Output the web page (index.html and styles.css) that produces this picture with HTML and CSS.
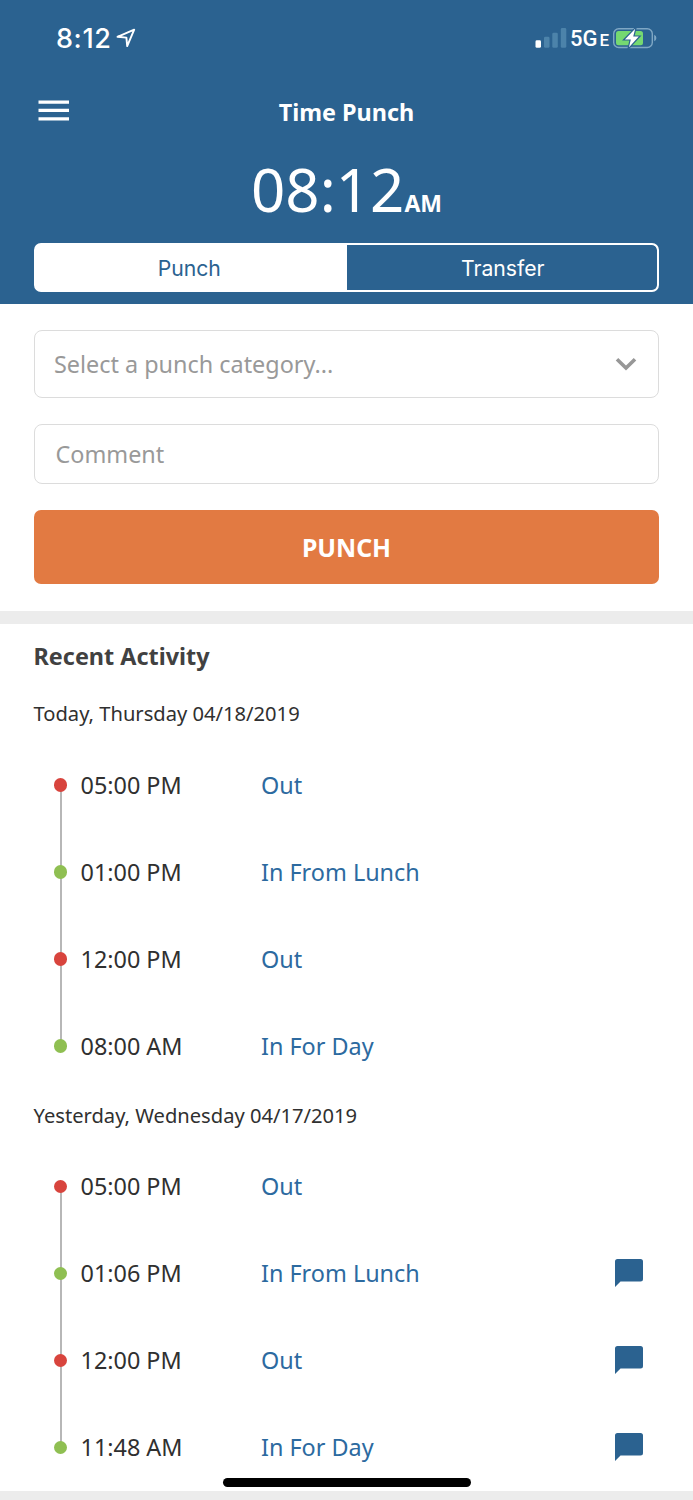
FILE: index.html
```html
<!DOCTYPE html>
<html lang="en">
<head>
<meta charset="utf-8">
<title>Time Punch</title>
<link rel="stylesheet" href="styles.css">
</head>
<body>
<header class="header">
  <div class="status">
    <div class="status-left">
      <span class="status-time">8:12</span>
      <svg class="location" width="20" height="20" viewBox="0 0 20 20"><path d="M1.5 8.8 18.2 1.7 11.2 18.1 10.4 9.6Z" fill="none" stroke="#fff" stroke-width="1.9" stroke-linejoin="round"/></svg>
    </div>
    <div class="status-right">
      <svg class="signal" width="32" height="20" viewBox="0 0 32 20"><rect x=".5" y="12.3" width="5.5" height="7.5" rx="1.4" fill="#fff"/><g fill="#4c83aa"><rect x="9" y="8.7" width="5.5" height="11.1" rx="1.4"/><rect x="17.3" y="4.7" width="5.5" height="15.1" rx="1.4"/><rect x="25.8" y="0" width="5.5" height="19.8" rx="1.4"/></g></svg>
      <span class="network">5G</span><span class="network-e">E</span>
      <svg class="battery" width="46" height="22" viewBox="0 0 46 22"><rect x="1.7" y="1.7" width="38.6" height="18.8" rx="5" fill="none" stroke="#7fa7c4" stroke-width="1.4"/><rect x="4" y="4" width="27" height="14.2" rx="2.5" fill="#75d971"/><path d="M42.2 7.8q2.2 1 2.2 3.2t-2.2 3.2Z" fill="#7fa7c4"/><path d="M23.2 1.8 12.9 12.4H18.8L17 20.2 26.8 9.6H21.2Z" fill="#fff" stroke="#2b6290" stroke-width="2.4" paint-order="stroke"/></svg>
    </div>
  </div>
  <div class="navbar">
    <svg class="menu" width="32" height="22" viewBox="0 0 32 22"><path d="M.5 2.2h30.5M.5 10.4h30.5M.5 18.8h30.5" stroke="#fff" stroke-width="3.2"/></svg>
    <h1 class="title">Time Punch</h1>
  </div>
  <div class="clock">08:12<span class="meridiem">AM</span></div>
  <div class="segments"><div class="segment active">Punch</div><div class="segment">Transfer</div></div>
</header>
<section class="form">
  <div class="field select"><span>Select a punch category...</span><svg width="22" height="14" viewBox="0 0 22 14"><path d="M2 2.2 11 11 20 2.2" fill="none" stroke="#979797" stroke-width="3.6"/></svg></div>
  <div class="field comment">Comment</div>
  <div class="punch">PUNCH</div>
</section>
<main class="activity">
  <h2 class="heading">Recent Activity</h2>
  <h3 class="date">Today, Thursday 04/18/2019</h3>
  <div class="timeline">
    <div class="row"><i class="dot out"></i><span class="time">05:00 PM</span><span class="kind">Out</span></div>
    <div class="row"><i class="dot"></i><span class="time">01:00 PM</span><span class="kind">In From Lunch</span></div>
    <div class="row"><i class="dot out"></i><span class="time">12:00 PM</span><span class="kind">Out</span></div>
    <div class="row"><i class="dot"></i><span class="time">08:00 AM</span><span class="kind">In For Day</span></div>
  </div>
  <h3 class="date">Yesterday, Wednesday 04/17/2019</h3>
  <div class="timeline">
    <div class="row"><i class="dot out"></i><span class="time">05:00 PM</span><span class="kind">Out</span></div>
    <div class="row"><i class="dot"></i><span class="time">01:06 PM</span><span class="kind">In From Lunch</span><svg class="note" width="28" height="28" viewBox="0 0 28 28"><path d="M2.5 0H25.5Q28 0 28 2.5V20Q28 22.5 25.5 22.5H5.5L0 28V2.5Q0 0 2.5 0Z"/></svg></div>
    <div class="row"><i class="dot out"></i><span class="time">12:00 PM</span><span class="kind">Out</span><svg class="note" width="28" height="28" viewBox="0 0 28 28"><path d="M2.5 0H25.5Q28 0 28 2.5V20Q28 22.5 25.5 22.5H5.5L0 28V2.5Q0 0 2.5 0Z"/></svg></div>
    <div class="row"><i class="dot"></i><span class="time">11:48 AM</span><span class="kind">In For Day</span><svg class="note" width="28" height="28" viewBox="0 0 28 28"><path d="M2.5 0H25.5Q28 0 28 2.5V20Q28 22.5 25.5 22.5H5.5L0 28V2.5Q0 0 2.5 0Z"/></svg></div>
  </div>
</main>
<div class="home-indicator"></div>
</body>
</html>
```
FILE: styles.css
```css
* { box-sizing: border-box; }
body {
  margin: 0;
  height: 1500px;
  overflow: hidden;
  position: relative;
  background: #ececec;
  color: #303030;
  font-family: "Noto Sans", sans-serif;
}
h1, h2, h3 { margin: 0; }
svg { display: block; flex: none; }
.header { height: 303.5px; background: #2b6290; color: #fff; }
.status { height: 76px; padding: 0 35.5px 0 56px; display: flex; justify-content: space-between; align-items: center; }
.status-left, .status-right { display: flex; align-items: center; }
.status-time { font: 500 27px/30px Inter, sans-serif; letter-spacing: 0.6px; width: 60px; padding-top: 1px; white-space: nowrap; }
.signal { margin-right: 3px; }
.network { font: 500 22px/24px Roboto, sans-serif; width: 29.5px; padding-top: 2px; }
.network-e { font: 500 17px/20px Roboto, sans-serif; width: 11px; padding-top: 4px; margin-right: 1px; }
.navbar { height: 72px; padding: 0 38px; display: grid; grid-template-columns: 32px 1fr 32px; align-items: center; }
.menu { margin-bottom: 3px; }
.title { text-align: center; font-size: 23.4px; line-height: 32px; font-weight: 700; }
.clock { height: 95px; padding-top: 0.5px; text-align: center; font-size: 60px; line-height: 80px; white-space: nowrap; }
.meridiem { font-size: 23px; font-weight: 700; }
.segments { height: 49px; margin: 0 34px; border: 2px solid #fff; border-radius: 7px; background: #fff; display: grid; grid-template-columns: 1fr 1fr; overflow: hidden; }
.segment { font: 400 21.2px/46px Inter, sans-serif; text-align: center; background: #2b6290; padding-left: 2px; border-radius: 0 5px 5px 0; }
.segment.active { background: #fff; color: #2b6290; padding: 0 4px 0 0; }
.form { height: 307.5px; padding: 26.5px 34px 0; background: #fff; }
.field { border: 1px solid #dcdcdc; border-radius: 8px; color: #999; font-size: 23.4px; display: flex; align-items: center; }
.select { height: 67.5px; padding: 1px 21px 0 19px; justify-content: space-between; margin-bottom: 26.5px; }
.comment { height: 59.5px; padding-left: 20.5px; margin-bottom: 26.5px; }
.punch { height: 73.5px; border-radius: 7px; background: #e27a42; color: #fff; font-size: 24.8px; line-height: 74px; font-weight: 700; text-align: center; }
.activity { height: 866.5px; margin-top: 13px; padding: 0 33.5px; background: #fff; }
.heading { height: 64px; font-size: 23.4px; line-height: 64px; color: #414141; }
.date { height: 53.5px; font-size: 20.15px; line-height: 51px; font-weight: 400; }
.row { height: 87px; padding-left: 20px; display: flex; align-items: center; font-size: 23.4px; position: relative; }
.row:not(:last-child)::before { content: ""; position: absolute; left: 26.2px; top: 43.5px; width: 2px; height: 87px; background: #b7b7b7; }
.dot { width: 13.5px; height: 13.5px; margin-bottom: 0.5px; border-radius: 50%; background: #8fbf52; position: relative; z-index: 1; }
.dot.out { background: #d8443d; }
.time { width: 181px; padding: 0 0 0.5px 13.5px; }
.kind { color: #2c6aa0; padding: 0 0 0.5px 13px; }
.note { margin: 0 16.5px 2px auto; fill: #2b6290; }
.home-indicator { position: absolute; left: 222.5px; top: 1478px; width: 248px; height: 8.5px; border-radius: 5px; background: #000; }
```
